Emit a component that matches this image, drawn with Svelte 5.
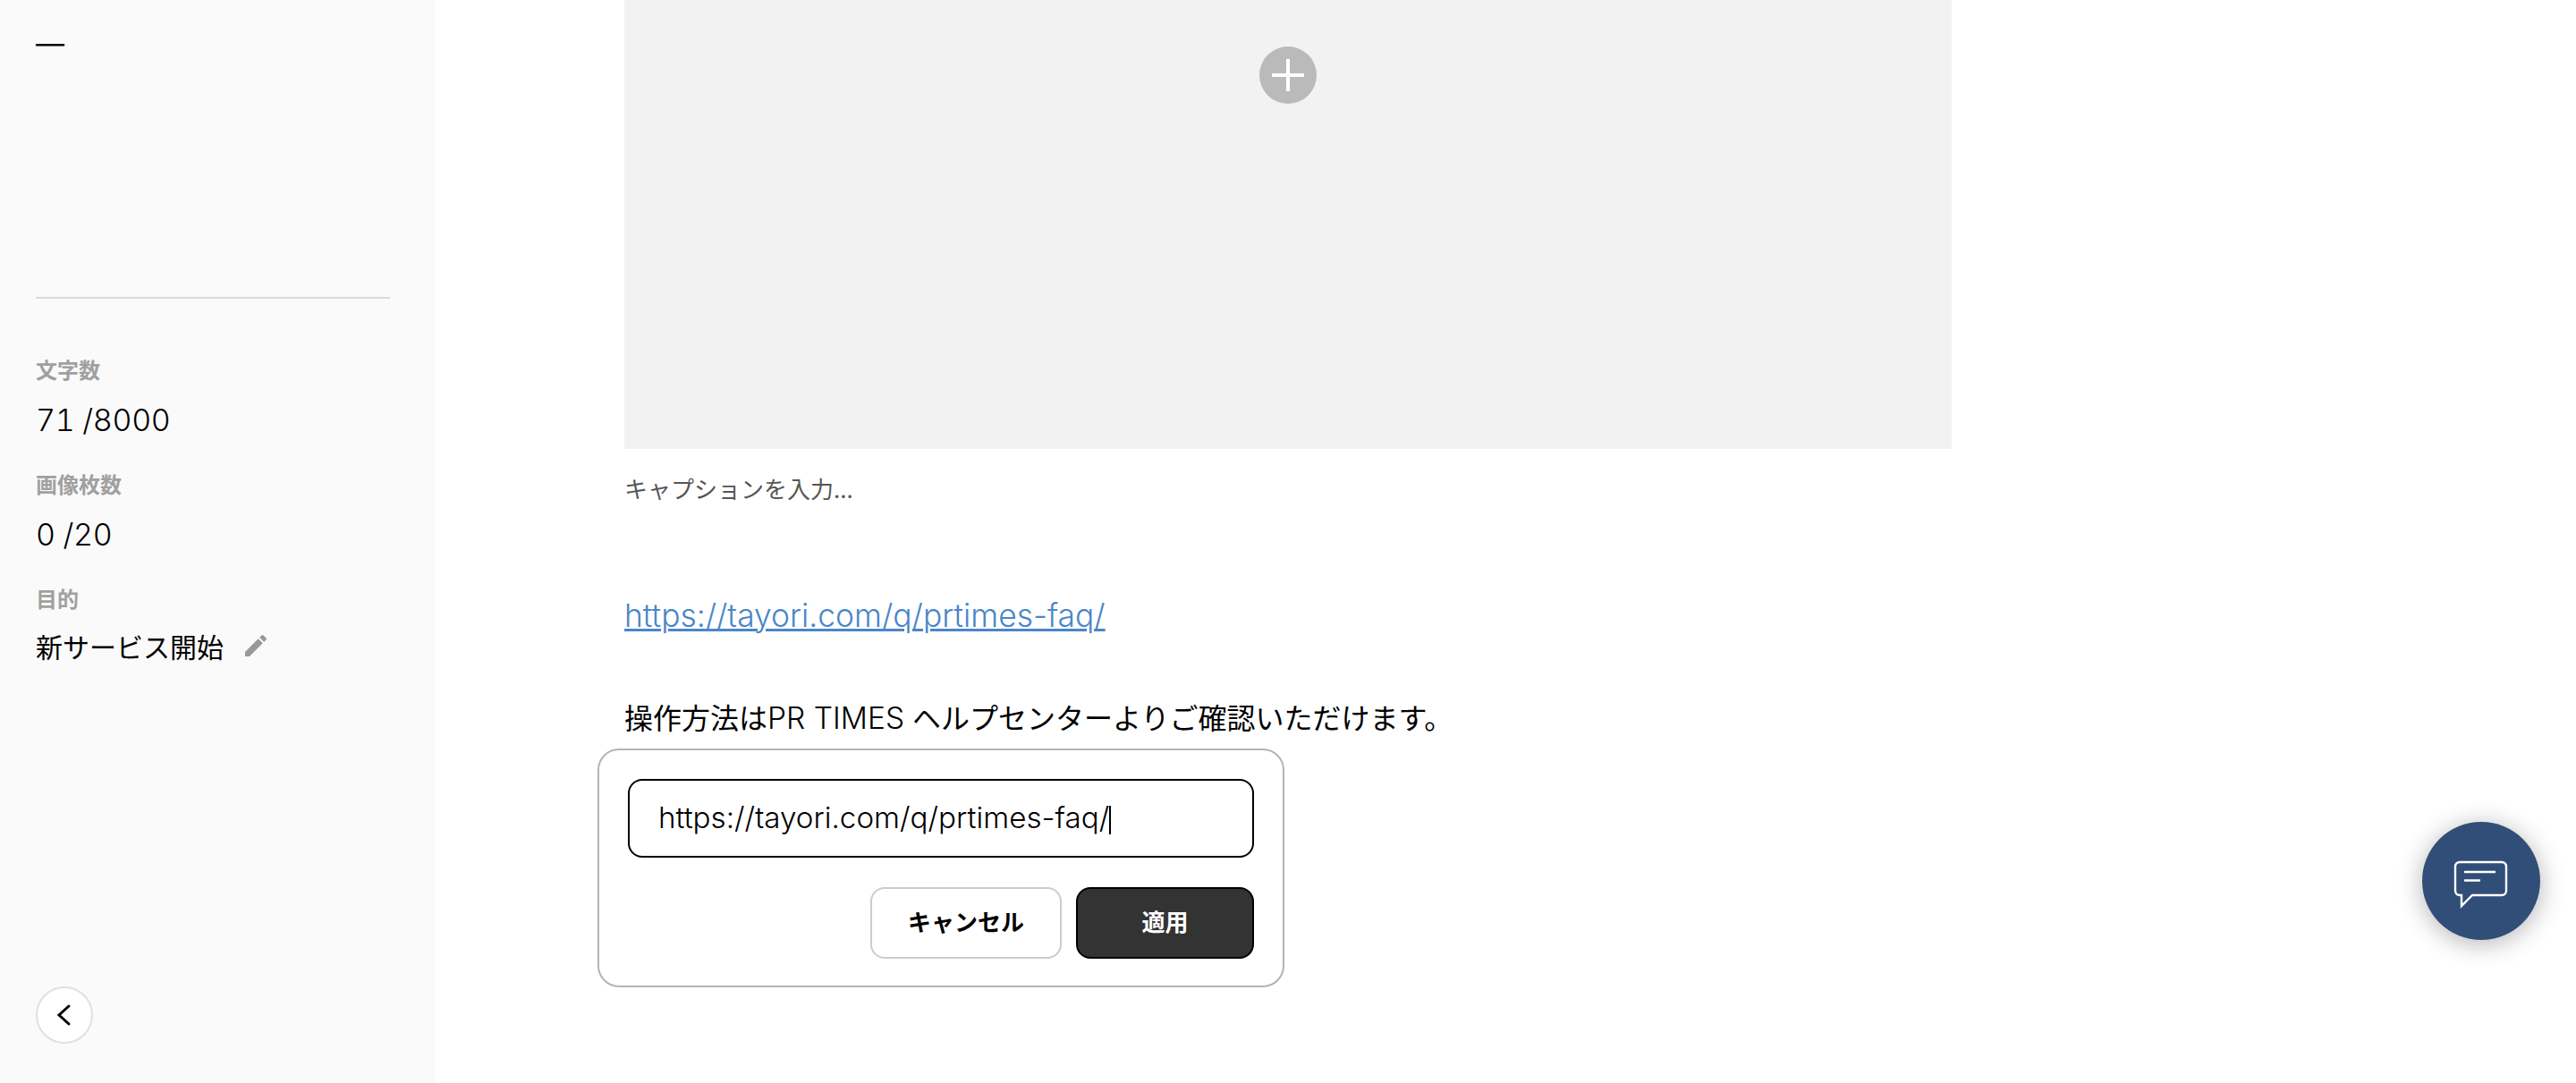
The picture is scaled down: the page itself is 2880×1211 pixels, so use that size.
<script>
  const stats = [
    { label: '文字数', value: '71 /8000' },
    { label: '画像枚数', value: '0 /20' }
  ];
</script>

<div class="page">
  <aside class="side">
    <div class="dash">—</div>
    <div class="rule"></div>
    <dl class="stats">
      {#each stats as s}
        <div class="stat">
          <dt>{s.label}</dt>
          <dd>{s.value}</dd>
        </div>
      {/each}
      <div class="stat">
        <dt>目的</dt>
        <dd class="purpose">
          <span>新サービス開始</span>
          <svg class="pencil" viewBox="0 0 24 24" aria-hidden="true"><path d="M3 17.25V21h3.75L17.81 9.94l-3.75-3.75L3 17.25zM20.71 7.04c.39-.39.39-1.02 0-1.41l-2.34-2.34c-.39-.39-1.02-.39-1.41 0l-1.83 1.83 3.75 3.75 1.83-1.83z"/></svg>
        </dd>
      </div>
    </dl>
    <button class="back" aria-label="戻る">
      <svg viewBox="0 0 24 32" aria-hidden="true"><path d="M17 6 6 16l11 10"/></svg>
    </button>
  </aside>

  <main class="main">
    <div class="article">
      <figure class="image">
        <span class="add" aria-hidden="true"></span>
      </figure>
      <p class="caption">キャプションを入力...</p>
      <p class="link"><a href="#top">https://tayori.com/q/prtimes-faq/</a></p>
      <p class="body">操作方法は<span class="latin">PR TIMES</span> ヘルプセンターよりご確認いただけます。</p>
    </div>

    <div class="popup">
      <div class="input">https://tayori.com/q/prtimes-faq/<i class="caret"></i></div>
      <div class="actions">
        <button class="btn cancel">キャンセル</button>
        <button class="btn apply">適用</button>
      </div>
    </div>
  </main>

  <button class="fab" aria-label="チャット">
    <svg viewBox="0 0 64 64" aria-hidden="true">
      <path d="M8 11h47a5 5 0 0 1 5 5v27a5 5 0 0 1-5 5H22L10 60V48H8a5 5 0 0 1-5-5V16a5 5 0 0 1 5-5z"/>
      <path d="M13 22h35M13 31.5h18"/>
    </svg>
  </button>
</div>

<style>
  :global(body) {
    margin: 0;
    background: #fff;
    font-family: Inter, "Noto Sans CJK JP", sans-serif;
    color: #000;
  }
  .page {
    display: flex;
    position: relative;
    width: 2880px;
    height: 1211px;
    overflow: hidden;
  }
  .side {
    box-sizing: border-box;
    width: 486px;
    height: 1211px;
    flex: none;
    display: flex;
    flex-direction: column;
    padding: 0 50px 44px 40px;
    background: #fafafa;
  }
  .dash {
    height: 332px;
    font-size: 32px;
    line-height: 98px;
  }
  .rule {
    height: 2px;
    background: #d9d9d9;
  }
  .stats {
    margin: 61px 0 0;
  }
  .stat {
    height: 128px;
  }
  dt {
    font-size: 24px;
    line-height: 36px;
    font-weight: 700;
    color: #a0a0a0;
    font-family: "Noto Sans CJK JP", sans-serif;
  }
  dd {
    margin: 15px 0 0;
    font-size: 34px;
    line-height: 48px;
    font-weight: 300;
    letter-spacing: -0.3px;
    font-variant-numeric: tabular-nums;
  }
  .purpose {
    display: flex;
    align-items: center;
    margin-top: 11px;
    font-size: 30px;
    font-weight: 400;
    letter-spacing: 0;
    font-family: "Noto Sans CJK JP", sans-serif;
  }
  .pencil {
    width: 32px;
    height: 32px;
    margin-left: 20px;
    fill: #999;
  }
  .back {
    box-sizing: border-box;
    width: 64px;
    height: 64px;
    margin-top: auto;
    padding: 0;
    border: 2px solid #e0e0e0;
    border-radius: 50%;
    background: #fff;
    display: flex;
    align-items: center;
    justify-content: center;
  }
  .back svg {
    width: 24px;
    height: 32px;
    fill: none;
    stroke: #000;
    stroke-width: 3;
    stroke-linecap: round;
  }
  .main {
    flex: 1;
    position: relative;
  }
  .article {
    width: 1484px;
    margin-left: 212px;
  }
  .image {
    height: 502px;
    margin: 0;
    background: #f2f2f2;
    display: flex;
    justify-content: center;
    padding-top: 52px;
    box-sizing: border-box;
  }
  .add {
    width: 64px;
    height: 64px;
    border-radius: 50%;
    background:
      linear-gradient(#fff, #fff) center / 36px 4px no-repeat,
      linear-gradient(#fff, #fff) center / 4px 36px no-repeat,
      #bababa;
  }
  .caption {
    margin: 25px 0 0;
    font-size: 26px;
    line-height: 38px;
    color: #555;
    font-family: "Noto Sans CJK JP", sans-serif;
  }
  .link {
    margin: 100px 0 0;
    font-size: 35.4px;
    line-height: 48px;
    font-weight: 300;
  }
  .link a {
    color: #4a86c8;
    text-decoration: underline;
    text-decoration-thickness: 2.5px;
  }
  .body {
    margin: 66px 0 0;
    font-size: 32px;
    line-height: 48px;
  }
  .latin {
    font-size: 33.5px;
    font-weight: 300;
  }
  .popup {
    position: absolute;
    left: 182px;
    top: 837px;
    box-sizing: border-box;
    width: 768px;
    height: 267px;
    padding: 32px;
    border: 2px solid #b4b4b4;
    border-radius: 24px;
    background: #fff;
  }
  .input {
    box-sizing: border-box;
    height: 88px;
    padding: 0 32px;
    border: 2px solid #000;
    border-radius: 16px;
    font-size: 33.2px;
    font-weight: 300;
    line-height: 82px;
    white-space: nowrap;
  }
  .caret {
    display: inline-block;
    width: 2px;
    height: 32px;
    background: #000;
    vertical-align: -7px;
  }
  .actions {
    display: flex;
    justify-content: flex-end;
    gap: 16px;
    margin-top: 33px;
  }
  .btn {
    box-sizing: border-box;
    height: 80px;
    padding: 0 0 6px;
    border-radius: 16px;
    font-family: "Noto Sans CJK JP", sans-serif;
    font-size: 26px;
    font-weight: 700;
  }
  .cancel {
    width: 214px;
    border: 2px solid #ccc;
    background: #fff;
    color: #000;
  }
  .apply {
    width: 199px;
    border: 2px solid #000;
    background: #333;
    color: #fff;
  }
  .fab {
    position: absolute;
    left: 2708px;
    top: 919px;
    width: 132px;
    height: 132px;
    padding: 0;
    border: 0;
    border-radius: 50%;
    background: #304e78;
    box-shadow: 0 4px 28px rgba(0, 0, 0, 0.3);
    display: flex;
    align-items: center;
    justify-content: center;
  }
  .fab svg {
    width: 64px;
    height: 64px;
    fill: none;
    stroke: #fff;
    stroke-width: 2.4;
  }
</style>
